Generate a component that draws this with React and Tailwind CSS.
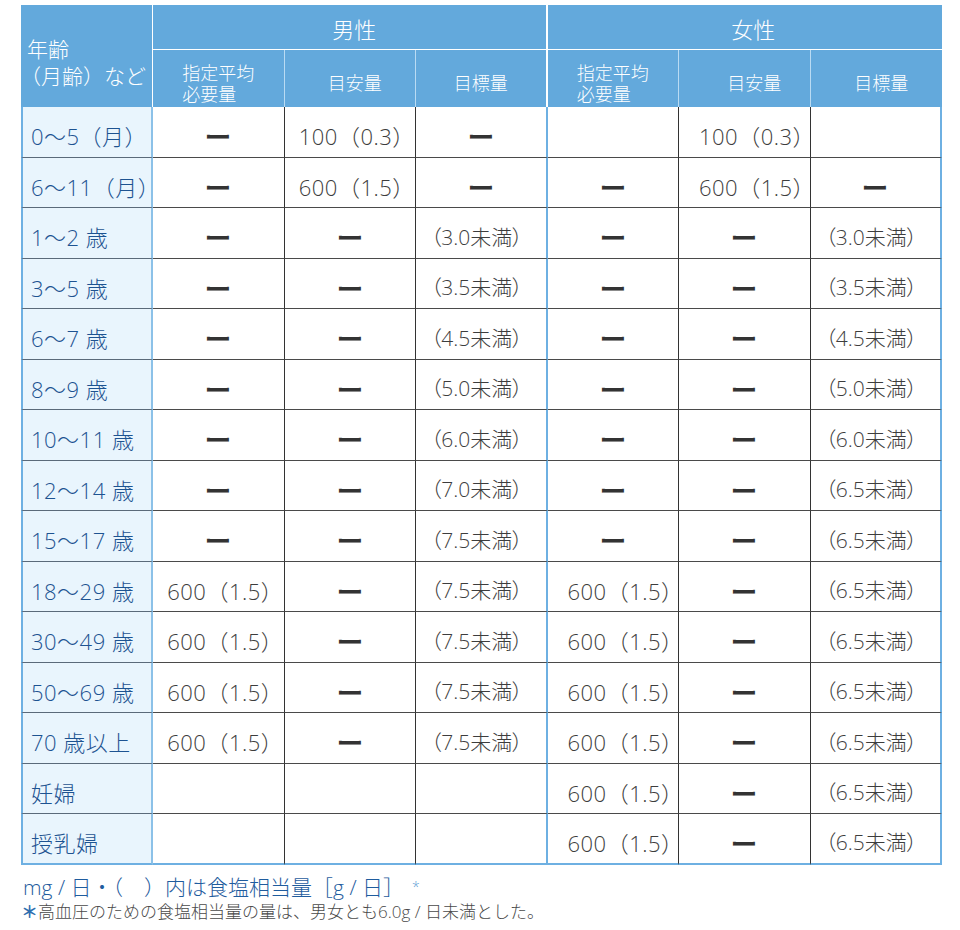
import React from "react";

const FONT = "[font-family:'Open_Sans','Noto_Sans_CJK_JP',sans-serif]";
const CJK = "[font-family:'Noto_Sans_CJK_JP',sans-serif]";

const D = "ー";
const rows = [
  ["0～5（月）", D, "100（0.3）", D, "", "100（0.3）", ""],
  ["6～11（月）", D, "600（1.5）", D, D, "600（1.5）", D],
  ["1～2 歳", D, D, "（3.0未満）", D, D, "（3.0未満）"],
  ["3～5 歳", D, D, "（3.5未満）", D, D, "（3.5未満）"],
  ["6～7 歳", D, D, "（4.5未満）", D, D, "（4.5未満）"],
  ["8～9 歳", D, D, "（5.0未満）", D, D, "（5.0未満）"],
  ["10～11 歳", D, D, "（6.0未満）", D, D, "（6.0未満）"],
  ["12～14 歳", D, D, "（7.0未満）", D, D, "（6.5未満）"],
  ["15～17 歳", D, D, "（7.5未満）", D, D, "（6.5未満）"],
  ["18～29 歳", "600（1.5）", D, "（7.5未満）", "600（1.5）", D, "（6.5未満）"],
  ["30～49 歳", "600（1.5）", D, "（7.5未満）", "600（1.5）", D, "（6.5未満）"],
  ["50～69 歳", "600（1.5）", D, "（7.5未満）", "600（1.5）", D, "（6.5未満）"],
  ["70 歳以上", "600（1.5）", D, "（7.5未満）", "600（1.5）", D, "（6.5未満）"],
  ["妊婦", "", "", "", "600（1.5）", D, "（6.5未満）"],
  ["授乳婦", "", "", "", "600（1.5）", D, "（6.5未満）"],
];

function Cell({ value, col, last }) {
  const right =
    col === 3 || col === 6
      ? "border-r-2 border-r-[#6eb0e2]"
      : "border-r border-r-[#333333]";
  const bottom = last
    ? "border-b-2 border-b-[#6eb0e2]"
    : "border-b border-b-[#4a4a4a]";
  const isTarget = col === 3 || col === 6;
  let pad = "";
  if (value !== D && value !== "") {
    pad = isTarget ? "pr-[8px]" : col >= 4 ? "pl-[20px]" : "pl-[14px]";
  }
  return (
    <div
      className={`flex items-center justify-center bg-white pt-[9px] ${pad} ${right} ${bottom}`}
    >
      {value === D ? (
        <span
          className={`${CJK} text-[24px] font-bold leading-none text-[#333333] scale-x-[1.12]`}
        >
          ー
        </span>
      ) : isTarget ? (
        <span className="text-[21px] leading-none font-light text-[#3d3d3d] [font-feature-settings:'palt']">
          {value}
        </span>
      ) : (
        <span className="text-[22px] leading-none font-light tracking-[0.5px] text-[#3d3d3d]">
          {value}
        </span>
      )}
    </div>
  );
}

const HB = "bg-[#63a9dc] text-white font-light";

export default function App() {
  return (
    <div className={`bg-white pl-[21px] pt-[5px] w-[960px] h-[930px] ${FONT}`}>
      <div className="grid w-[921px] grid-cols-[132px_repeat(6,minmax(0,1fr))] grid-rows-[45px_57px_repeat(15,50.5px)]">
        {/* header */}
        <div
          className={`row-span-2 flex flex-col justify-center pt-[12px] pl-[6px] border-r border-r-white text-[21px] leading-[27px] ${HB} ${CJK}`}
        >
          <span>年齢</span>
          <span className="-ml-[7px]">（月齢）など</span>
        </div>
        <div
          className={`col-span-3 flex items-center justify-center pt-[3px] pl-[10px] border-r-2 border-r-white border-b border-b-white text-[22px] ${HB} ${CJK}`}
        >
          男性
        </div>
        <div
          className={`col-span-3 flex items-center justify-center pt-[3px] pl-[17px] border-b border-b-white text-[22px] ${HB} ${CJK}`}
        >
          女性
        </div>
        {[0, 1].map((g) => (
          <React.Fragment key={g}>
            <div
              className={`flex items-center justify-center pt-[8px] border-r border-r-[#b9dbf3] text-[18px] leading-[21px] ${HB} ${CJK}`}
            >
              <div className="flex flex-col items-start">
                <span className="block">指定平均</span>
                <span className="block">必要量</span>
              </div>
            </div>
            <div
              className={`flex items-center justify-center pt-[8px] border-r border-r-[#b9dbf3] text-[18px] ${HB} ${CJK} ${
                g === 0 ? "pl-[10px]" : "pl-[20px]"
              }`}
            >
              目安量
            </div>
            <div
              className={`flex items-center justify-center pt-[8px] text-[18px] ${HB} ${CJK} ${
                g === 0 ? "border-r-2 border-r-white" : "pl-[10px]"
              }`}
            >
              目標量
            </div>
          </React.Fragment>
        ))}

        {/* body */}
        {rows.map((r, i) => {
          const last = i === rows.length - 1;
          return (
            <React.Fragment key={i}>
              <div
                className={`flex items-center pl-[8px] pt-[9px] bg-[#e9f5fd] border-l-2 border-l-[#6eb0e2] border-r-2 border-r-[#8cc1e8] text-[22px] leading-none tracking-[0.5px] font-light text-[#1d5391] ${
                  last
                    ? "border-b-2 border-b-[#6eb0e2]"
                    : "border-b border-b-[#5a6a7a]"
                }`}
              >
                {r[0]}
              </div>
              {r.slice(1).map((v, j) => (
                <Cell key={j} value={v} col={j + 1} last={last} />
              ))}
            </React.Fragment>
          );
        })}
      </div>
      <div className="mt-[9px] pl-[2px] text-[21px] leading-[26px] text-[#1f5c9e] font-light">
        mg / 日・（　）内は食塩相当量［g / 日］
        <span className="ml-[8px] text-[14px] align-top text-[#5f9fd6]">*</span>
      </div>
      <div className="mt-[1px] text-[17px] leading-[22px] text-[#4a4a4a] font-light">
        <span className="text-[#2f6fb0] font-bold">＊</span>
        高血圧のための食塩相当量の量は、男女とも6.0g / 日未満とした。
      </div>
    </div>
  );
}
